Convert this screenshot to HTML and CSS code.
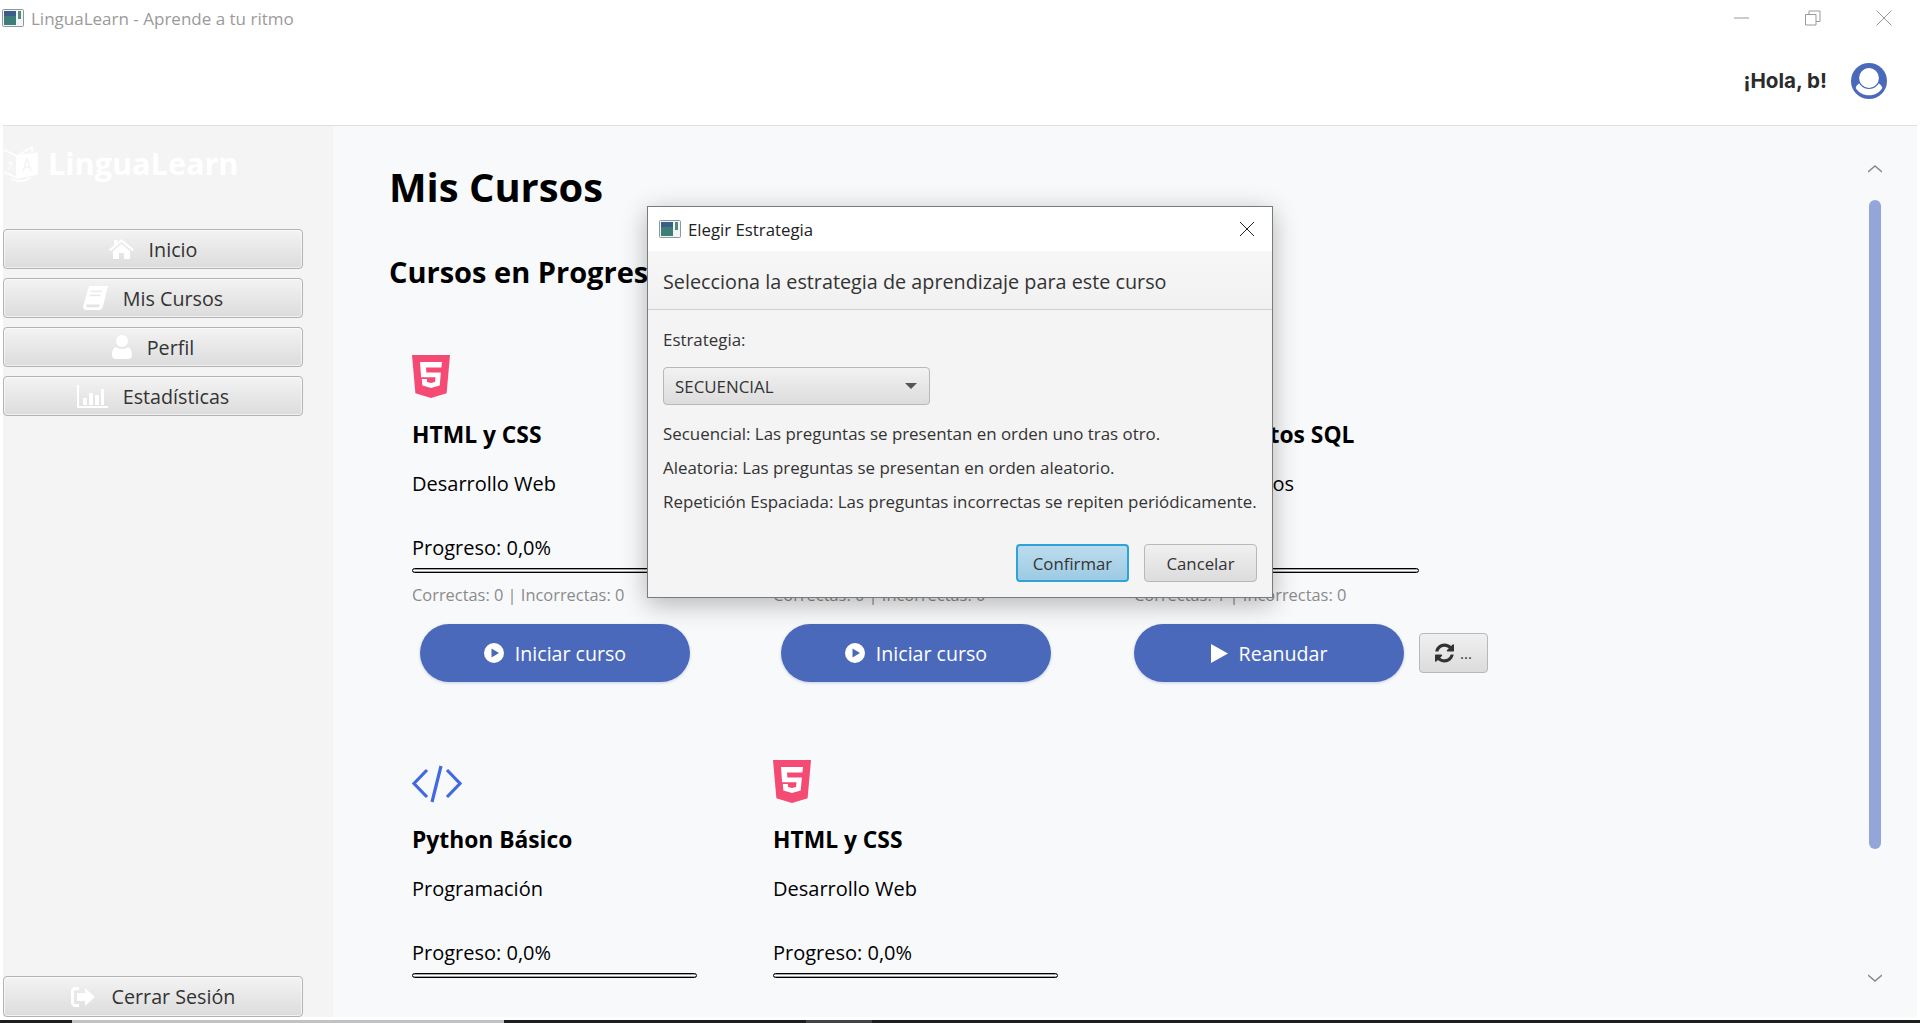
FILE: index.html
```html
<!DOCTYPE html>
<html lang="es">
<head>
  <meta charset="UTF-8" />
  <title>LinguaLearn - Aprende a tu ritmo</title>
  <link rel="stylesheet" href="styles.css">
</head>
<body>
  <svg class="defs" width="0" height="0">
    <symbol id="appicon" viewBox="0 0 22 18">
      <rect x="0.5" y="0.5" width="21" height="17" rx="1" fill="#f2f4f6" stroke="#8d97a0"/>
      <rect x="2" y="2" width="12" height="14" fill="#3d7f78"/>
      <rect x="2" y="2" width="12" height="5" fill="#3a5f86"/>
      <rect x="16" y="2" width="3" height="8" fill="#4f8f78"/>
    </symbol>
    <symbol id="html5" viewBox="0 0 38 43">
      <path fill="#f44a74" d="M0 0h38l-3.400 38.300L19 43 3.400 38.300z"/>
      <path fill="#fff" d="M8 7h22l-.6 5.400H14l.4 5h14.500l-1.200 13L19 33l-8.600-2.600-.6-6.500h5l.3 3L19 28l4-1.100.5-4.600H9.100z"/>
    </symbol>
    <symbol id="playcircle" viewBox="0 0 20 20">
      <circle cx="10" cy="10" r="10" fill="#fff"/>
      <path d="M7.500 5.500l7.500 4.500-7.500 4.500z" fill="#4b69bb"/>
    </symbol>
  </svg>

  <div class="titlebar">
    <div class="titlebar-left">
      <svg class="appicon" width="22" height="18"><use href="#appicon"/></svg>
      <span>LinguaLearn - Aprende a tu ritmo</span>
    </div>
    <div class="winbtns">
      <svg width="16" height="16" viewBox="0 0 16 16"><path d="M0 8h15" stroke="#999" fill="none"/></svg>
      <svg width="16" height="16" viewBox="0 0 16 16"><path d="M.5 4.500h10.500v10.500H.5zM4 4.500V1h11v10.500h-4" stroke="#999" fill="none"/></svg>
      <svg width="16" height="16" viewBox="0 0 16 16"><path d="M.5.500l15 15M15.500.500l-15 15" stroke="#999" fill="none"/></svg>
    </div>
  </div>

  <header class="topbar">
    <span class="greeting">¡Hola, b!</span>
    <svg class="avatar" width="36" height="36" viewBox="0 0 36 36">
      <circle cx="18" cy="18" r="18" fill="#4b69bb"/>
      <path d="M4.700 25C6 21 10 18.500 13 18.500h10c3 0 7 2.500 8.300 6.500-2.500 4.500-7.500 7.300-13.300 7.300S7.200 29.500 4.700 25z" fill="#fff"/>
      <circle cx="18" cy="15" r="10.500" fill="#fff" stroke="#4b69bb" stroke-width="1.200"/>
    </svg>
  </header>

  <div class="app">
    <aside class="sidebar">
      <div class="logo">
        <svg width="36" height="38" viewBox="0 0 36 38" fill="none" stroke="#fff" stroke-width="1.500">
          <path d="M1 6l13 6 15-9v5"/>
          <path d="M14 12v22L1 28"/>
          <path d="M14 12l20 -3v21l-20 4z" fill="#fff"/>
          <path d="M20 27l4-12 4 12M21.500 23h5" stroke="#f4f4f4"/>
          <path d="M4 19h6M7 17v2M5 26l4-7" stroke-width="1"/>
          <path d="M8 35c6 3 14 3 20-2"/>
        </svg>
        <span>LinguaLearn</span>
      </div>

      <nav class="nav">
        <a class="navbtn">
          <svg width="25" height="20" viewBox="0 0 25 20" fill="#fff"><path d="M12.500 0L25 10.500l-1.500 1.700L12.500 3 1.500 12.200 0 10.500l5-4.200V1h3.500v2.300z"/><path d="M12.500 5L21 12v8h-6v-6h-5v6H4v-8z"/></svg>
          <span>Inicio</span>
        </a>
        <a class="navbtn">
          <svg width="25" height="24" viewBox="0 0 25 24" fill="#fff"><path d="M6 0h19l-5 20c-.5 2-1.500 4-4 4H3c-2.500 0-3.500-2.500-2.500-5zm2 4.500l-.5 1.800h11l.5-1.800zM6.800 8.500l-.5 1.800h11l.5-1.800zM3.500 18.500c-.6 1.500 0 2.800 1.500 2.800h10.500c.7-.7 1-1.600 1.200-2.800z" fill-rule="evenodd"/></svg>
          <span>Mis Cursos</span>
        </a>
        <a class="navbtn">
          <svg width="20" height="24" viewBox="0 0 20 24" fill="#fff"><circle cx="10" cy="6" r="6"/><path d="M4 12c3 2.500 9 2.500 12 0 3 1 4 4 4 8 0 2.500-1.500 4-4 4H4c-2.500 0-4-1.500-4-4 0-4 1-7 4-8z"/></svg>
          <span>Perfil</span>
        </a>
        <a class="navbtn">
          <svg width="31" height="23" viewBox="0 0 31 23" fill="#fff"><path d="M0 0h2v21h29v2H0z"/><path d="M6 13h4v7H6zM12 8h4v12h-4zM18 10h4v10h-4zM24 4h3v16h-3z"/></svg>
          <span>Estadísticas</span>
        </a>
      </nav>

      <a class="navbtn logout">
        <svg width="24" height="20" viewBox="0 0 24 20" fill="#fff"><path d="M8 0H4C2 0 0 2 0 4v12c0 2 2 4 4 4h4v-3H4c-.5 0-1-.5-1-1V4c0-.5.500-1 1-1h4z"/><path d="M14 1l10 9-10 9v-5H6V6h8z"/></svg>
        <span>Cerrar Sesión</span>
      </a>
    </aside>

    <main class="content">
      <div class="scroller">
        <h1>Mis Cursos</h1>
        <h2>Cursos en Progreso</h2>

        <div class="cards">
          <section class="card">
            <svg class="course-icon" width="38" height="43"><use href="#html5"/></svg>
            <h3>HTML y CSS</h3>
            <p class="cat">Desarrollo Web</p>
            <p class="prog">Progreso: 0,0%</p>
            <div class="bar"></div>
            <p class="stats">Correctas: 0 | Incorrectas: 0</p>
            <div class="actions">
              <a class="pill"><svg width="20" height="20"><use href="#playcircle"/></svg>Iniciar curso</a>
            </div>
          </section>

          <!-- title and progress of this card are behind the dialog -->
          <section class="card">
            <svg class="course-icon" width="38" height="43"><use href="#html5"/></svg>
            <h3>&nbsp;</h3>
            <p class="cat">&nbsp;</p>
            <p class="prog">&nbsp;</p>
            <div class="bar"></div>
            <p class="stats">Correctas: 0 | Incorrectas: 0</p>
            <div class="actions">
              <a class="pill"><svg width="20" height="20"><use href="#playcircle"/></svg>Iniciar curso</a>
            </div>
          </section>

          <section class="card">
            <svg class="course-icon" width="38" height="43"><use href="#html5"/></svg>
            <h3>Bases de Datos SQL</h3>
            <p class="cat">Gestión de Datos</p>
            <p class="prog">&nbsp;</p>
            <div class="bar"></div>
            <p class="stats">Correctas: 1 | Incorrectas: 0</p>
            <div class="actions actions-wide">
              <a class="pill"><svg width="17" height="19" viewBox="0 0 17 19"><path d="M0 0l17 9.500L0 19z" fill="#fff"/></svg>Reanudar</a>
              <a class="refresh">
                <svg width="19" height="20" viewBox="0 0 1536 1536" fill="#333"><path d="M1511 928q0 5-1 7-64 268-268 434.500T764 1536q-146 0-282.500-55T238 1324l-129 129q-19 19-45 19t-45-19-19-45V960q0-26 19-45t45-19h448q26 0 45 19t19 45-19 45l-137 137q71 66 161 102t187 36q134 0 250-65t186-179q11-17 53-117 8-23 30-23h192q13 0 22.500 9.500t9.500 22.500zm25-800v448q0 26-19 45t-45 19h-448q-26 0-45-19t-19-45 19-45l138-138Q969 256 768 256q-134 0-250 65T332 500q-11 17-53 117-8 23-30 23H50q-13 0-22.500-9.500T18 608v-7q65-268 270-434.500T768 0q146 0 284 55.500T1297 212l130-129q19-19 45-19t45 19 19 45z"/></svg>
                <span>...</span>
              </a>
            </div>
          </section>

          <section class="card">
            <svg class="course-icon code-icon" width="50" height="38" viewBox="0 0 50 38" fill="none" stroke="#4169e1" stroke-width="3.200"><path d="M15 5L2 18.500 15 32M35 5l13 13.500L35 32M29 1L20 37"/></svg>
            <h3>Python Básico</h3>
            <p class="cat">Programación</p>
            <p class="prog">Progreso: 0,0%</p>
            <div class="bar"></div>
          </section>

          <section class="card">
            <svg class="course-icon" width="38" height="43"><use href="#html5"/></svg>
            <h3>HTML y CSS</h3>
            <p class="cat">Desarrollo Web</p>
            <p class="prog">Progreso: 0,0%</p>
            <div class="bar"></div>
          </section>
        </div>
      </div>

      <div class="scrolltrack">
        <svg width="14" height="8" viewBox="0 0 14 8" fill="none" stroke="#888" stroke-width="1.500"><path d="M0 7l7-6 7 6"/></svg>
        <div class="thumb"></div>
        <svg width="14" height="8" viewBox="0 0 14 8" fill="none" stroke="#888" stroke-width="1.500"><path d="M0 1l7 6 7-6"/></svg>
      </div>
    </main>
  </div>

  <div class="taskstrip">
    <span class="seg-a"></span>
    <span class="seg-b"></span>
    <span class="seg-c"></span>
    <span class="seg-d"></span>
    <span class="seg-e"></span>
  </div>

  <div class="dialog">
    <div class="dialog-title">
      <svg width="22" height="18"><use href="#appicon"/></svg>
      <span>Elegir Estrategia</span>
      <svg class="dialog-close" width="16" height="16" viewBox="0 0 16 16"><path d="M1 1l14 14M15 1L1 15" stroke="#222" fill="none"/></svg>
    </div>
    <div class="dialog-head">Selecciona la estrategia de aprendizaje para este curso</div>
    <div class="dialog-body">
      <label>Estrategia:</label>
      <div class="combo"><span>SECUENCIAL</span><i class="caret"></i></div>
      <p>Secuencial: Las preguntas se presentan en orden uno tras otro.</p>
      <p>Aleatoria: Las preguntas se presentan en orden aleatorio.</p>
      <p>Repetición Espaciada: Las preguntas incorrectas se repiten periódicamente.</p>
    </div>
    <div class="dialog-btns">
      <a class="fxbtn default">Confirmar</a>
      <a class="fxbtn">Cancelar</a>
    </div>
  </div>
</body>
</html>
```

FILE: styles.css
```css
html, body {
  margin: 0;
  height: 100%;
  overflow: hidden;
}
body {
  width: 1920px;
  height: 1023px;
  display: flex;
  flex-direction: column;
  font-family: "Open Sans", "Noto Sans", Arial, sans-serif;
  background: #fff;
  color: #000;
  position: relative;
}
.defs {
  position: absolute;
}
p, h1, h2, h3 {
  margin: 0;
}

/* window chrome */
.titlebar {
  height: 36px;
  display: flex;
  align-items: center;
  justify-content: space-between;
  padding-left: 2px;
  padding-right: 28px;
  flex: none;
}
.titlebar-left {
  display: flex;
  align-items: center;
  gap: 7px;
  font-size: 17px;
  color: #9a9a9a;
}
.winbtns {
  display: flex;
  gap: 55px;
}
.topbar {
  height: 90px;
  flex: none;
  display: flex;
  align-items: center;
  justify-content: flex-end;
  gap: 24px;
  padding-right: 30px;
  box-sizing: border-box;
  border-bottom: 1px solid #e0e0e0;
  margin-left: 3px;
  margin-right: 3px;
}
.greeting {
  font-family: "Inter", sans-serif;
  font-weight: 700;
  font-size: 20.6px;
  color: #2b2b2b;
}

/* main layout */
.app {
  flex: 1;
  min-height: 0;
  display: flex;
  margin: 0 3px 3px;
}
.sidebar {
  width: 330px;
  flex: none;
  background: #f4f4f4;
  display: flex;
  flex-direction: column;
}
.logo {
  height: 103px;
  flex: none;
  display: flex;
  align-items: center;
  gap: 9px;
  color: #fff;
  font-weight: 700;
  font-size: 30.6px;
  padding-bottom: 30px;
  box-sizing: border-box;
}
.nav {
  display: flex;
  flex-direction: column;
  gap: 9px;
  flex: 1;
}
.navbtn {
  width: 300px;
  height: 40px;
  flex: none;
  box-sizing: border-box;
  display: flex;
  align-items: center;
  justify-content: center;
  gap: 15px;
  border: 1px solid #b3b3b3;
  border-radius: 4px;
  background: linear-gradient(#f3f3f3, #dcdcdc);
  box-shadow: inset 0 0 0 1px rgba(255, 255, 255, 0.6);
  font-size: 19.7px;
  color: #333;
}
.logout {
  height: 41px;
  gap: 17px;
}
.content {
  flex: 1;
  display: flex;
  background: #f8f9fb;
  min-width: 0;
}
.scroller {
  flex: 1;
  padding: 35px 0 0 56px;
  overflow: hidden;
  min-width: 0;
}
h1 {
  font-size: 39.9px;
  font-weight: 700;
  line-height: 52px;
}
h2 {
  font-size: 29px;
  font-weight: 700;
  line-height: 34px;
  margin-top: 42px;
}
.cards {
  display: grid;
  grid-template-columns: repeat(3, 361px);
  margin-top: 66px;
  row-gap: 78px;
  margin-left: 23px;
}
.card {
  width: 285px;
}
.course-icon {
  display: block;
  margin-bottom: 23px;
}
.code-icon {
  margin-top: 5px;
}
h3 {
  font-size: 22.8px;
  font-weight: 700;
  line-height: 28px;
}
.cat {
  font-size: 20px;
  line-height: 28px;
  margin-top: 21px;
}
.prog {
  font-size: 20px;
  line-height: 28px;
  margin-top: 36px;
}
.bar {
  height: 5px;
  box-sizing: border-box;
  margin-top: 6px;
  background: linear-gradient(#666, #fff 40%, #fff 60%, #666);
  border: 1px solid #000;
  border-radius: 3px;
}
.stats {
  font-size: 16.4px;
  line-height: 24px;
  color: #8b8b8b;
  margin-top: 10px;
}
.actions {
  display: flex;
  align-items: center;
  gap: 15px;
  margin-top: 17px;
  margin-left: 8px;
  width: 500px;
}
.actions-wide {
  margin-left: 0;
}
.pill {
  width: 270px;
  height: 58px;
  flex: none;
  display: flex;
  align-items: center;
  justify-content: center;
  gap: 11px;
  border-radius: 29px;
  background: #4b69bb;
  box-shadow: 0 1px 3px rgba(75, 105, 187, 0.3);
  color: #fff;
  font-size: 19.6px;
}
.refresh {
  width: 69px;
  height: 40px;
  box-sizing: border-box;
  display: flex;
  align-items: center;
  justify-content: center;
  gap: 6px;
  border: 1px solid #b8b8b8;
  border-radius: 4px;
  background: linear-gradient(#f0f0f0, #dcdcdc);
  font-size: 15px;
  color: #333;
}
.scrolltrack {
  width: 60px;
  flex: none;
  display: flex;
  flex-direction: column;
  align-items: center;
  padding-top: 39px;
  padding-right: 24px;
  box-sizing: border-box;
}
.thumb {
  width: 12px;
  height: 649px;
  flex: none;
  margin-top: 27px;
  margin-bottom: 125px;
  background: #94a6d9;
  border-radius: 6px;
}
.taskstrip {
  height: 3px;
  flex: none;
  display: flex;
}
.seg-a { width: 72px; background: #1e1e1e; }
.seg-b { width: 432px; background: #c2c2c2; }
.seg-c { width: 302px; background: #1e1e1e; }
.seg-d { width: 66px; background: #444; }
.seg-e { flex: 1; background: #1e1e1e; }

/* dialog */
.dialog {
  position: absolute;
  left: 647px;
  top: 206px;
  width: 626px;
  height: 392px;
  box-sizing: border-box;
  border: 1px solid #7a7a7a;
  background: #f4f4f4;
  box-shadow: 0 6px 24px rgba(0, 0, 0, 0.28);
  display: flex;
  flex-direction: column;
  color: #333;
}
.dialog-title {
  height: 44px;
  flex: none;
  background: #fff;
  display: flex;
  align-items: center;
  gap: 7px;
  padding: 0 17px 0 11px;
  font-size: 16.8px;
  color: #222;
}
.dialog-close {
  margin-left: auto;
}
.dialog-head {
  height: 59px;
  flex: none;
  box-sizing: border-box;
  padding: 17px 15px 0;
  font-size: 19.8px;
  background: linear-gradient(#f7f7f7, #f1f1f1);
  border-bottom: 1px solid #cfcfcf;
}
.dialog-body {
  flex: 1;
  padding: 18px 15px 0;
  font-size: 16.9px;
}
.dialog-body label {
  display: block;
  line-height: 24px;
}
.combo {
  width: 267px;
  height: 38px;
  box-sizing: border-box;
  margin-top: 15px;
  margin-bottom: 17px;
  padding: 0 12px 0 11px;
  display: flex;
  align-items: center;
  justify-content: space-between;
  border: 1px solid #b8b8b8;
  border-radius: 4px;
  background: linear-gradient(#f2f2f2, #dcdcdc);
}
.caret {
  width: 0;
  height: 0;
  border-left: 6px solid transparent;
  border-right: 6px solid transparent;
  border-top: 6px solid #555;
}
.dialog-body p {
  line-height: 24px;
  margin-bottom: 10px;
  white-space: nowrap;
}
.dialog-btns {
  display: flex;
  justify-content: flex-end;
  gap: 15px;
  padding: 0 15px 15px;
}
.fxbtn {
  width: 113px;
  height: 38px;
  box-sizing: border-box;
  display: flex;
  align-items: center;
  justify-content: center;
  border: 1px solid #b8b8b8;
  border-radius: 4px;
  background: linear-gradient(#f0f0f0, #dcdcdc);
  font-size: 16.8px;
}
.fxbtn.default {
  border: 2px solid #2fa3d8;
  background: linear-gradient(#bcdcee, #9ccbe3);
}
```
